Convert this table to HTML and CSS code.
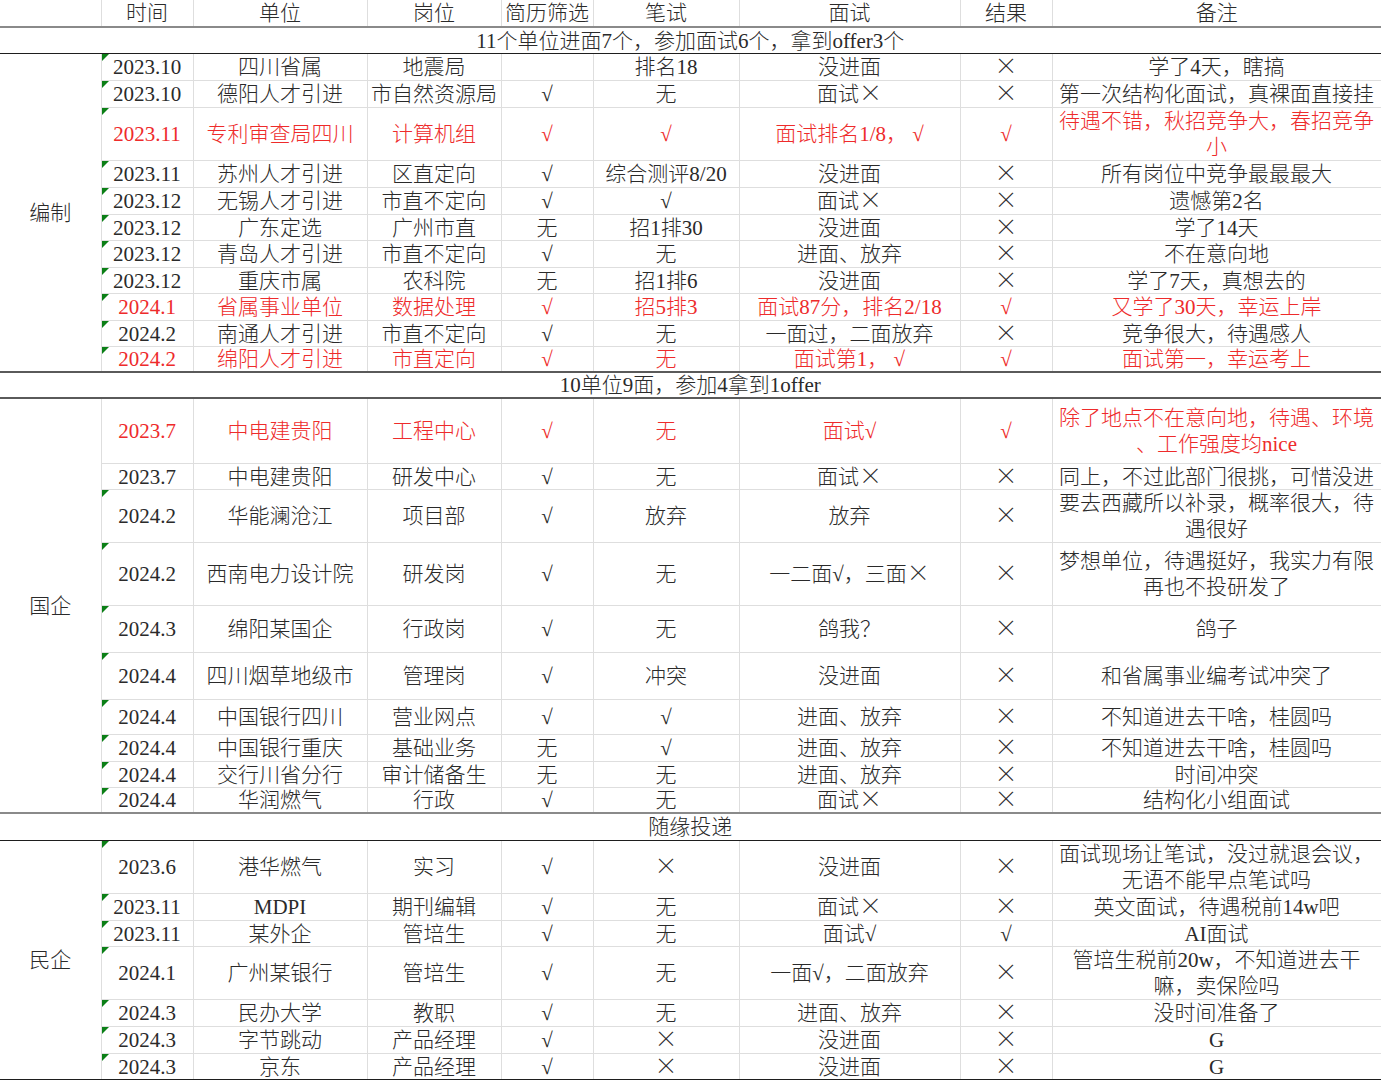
FILE: index.html
```html
<!DOCTYPE html>
<html lang="zh">
<head>
<meta charset="utf-8">
<title>求职记录</title>
<link rel="stylesheet" href="styles.css">
</head>
<body>
<table class="sheet">
  <colgroup>
    <col class="c-cat"><col class="c-time"><col class="c-org"><col class="c-pos"><col class="c-cv"><col class="c-exam"><col class="c-iv"><col class="c-res"><col class="c-note">
  </colgroup>
  <thead>
    <tr class="head r27">
      <th></th><th>时间</th><th>单位</th><th>岗位</th><th>简历筛选</th><th>笔试</th><th>面试</th><th>结果</th><th>备注</th>
    </tr>
  </thead>
  <tbody>
    <tr class="sum sum-a r26"><td colspan="9">11个单位进面7个，参加面试6个，拿到offer3个</td></tr>

    <tr class="r27"><td class="cat" rowspan="11">编制</td><td class="t mk">2023.10</td><td>四川省属</td><td>地震局</td><td></td><td>排名18</td><td>没进面</td><td><span class="x">×</span></td><td class="note">学了4天，瞎搞</td></tr>
    <tr class="r27"><td class="t mk">2023.10</td><td>德阳人才引进</td><td>市自然资源局</td><td>√</td><td>无</td><td>面试<span class="x">×</span></td><td><span class="x">×</span></td><td class="note">第一次结构化面试，真裸面直接挂</td></tr>
    <tr class="r53 red"><td class="t mk">2023.11</td><td>专利审查局四川</td><td>计算机组</td><td>√</td><td>√</td><td>面试排名1/8， √</td><td>√</td><td class="note two">待遇不错，秋招竞争大，春招竞争<br>小</td></tr>
    <tr class="r27"><td class="t mk">2023.11</td><td>苏州人才引进</td><td>区直定向</td><td>√</td><td>综合测评8/20</td><td>没进面</td><td><span class="x">×</span></td><td class="note">所有岗位中竞争最最最大</td></tr>
    <tr class="r27"><td class="t mk">2023.12</td><td>无锡人才引进</td><td>市直不定向</td><td>√</td><td>√</td><td>面试<span class="x">×</span></td><td><span class="x">×</span></td><td class="note">遗憾第2名</td></tr>
    <tr class="r26"><td class="t mk">2023.12</td><td>广东定选</td><td>广州市直</td><td>无</td><td>招1排30</td><td>没进面</td><td><span class="x">×</span></td><td class="note">学了14天</td></tr>
    <tr class="r27"><td class="t mk">2023.12</td><td>青岛人才引进</td><td>市直不定向</td><td>√</td><td>无</td><td>进面、放弃</td><td><span class="x">×</span></td><td class="note">不在意向地</td></tr>
    <tr class="r26"><td class="t mk">2023.12</td><td>重庆市属</td><td>农科院</td><td>无</td><td>招1排6</td><td>没进面</td><td><span class="x">×</span></td><td class="note">学了7天，真想去的</td></tr>
    <tr class="r27 red"><td class="t mk">2024.1</td><td>省属事业单位</td><td>数据处理</td><td>√</td><td>招5排3</td><td>面试87分，排名2/18</td><td>√</td><td class="note">又学了30天，幸运上岸</td></tr>
    <tr class="r26"><td class="t mk">2024.2</td><td>南通人才引进</td><td>市直不定向</td><td>√</td><td>无</td><td>一面过，二面放弃</td><td><span class="x">×</span></td><td class="note">竞争很大，待遇感人</td></tr>
    <tr class="r26 red"><td class="t mk">2024.2</td><td>绵阳人才引进</td><td>市直定向</td><td>√</td><td>无</td><td>面试第1， √</td><td>√</td><td class="note">面试第一，幸运考上</td></tr>

    <tr class="sum sum-b r26"><td colspan="9">10单位9面，参加4拿到1offer</td></tr>

    <tr class="r65 red"><td class="cat" rowspan="10">国企</td><td class="t">2023.7</td><td>中电建贵阳</td><td>工程中心</td><td>√</td><td>无</td><td>面试√</td><td>√</td><td class="note two">除了地点不在意向地，待遇、环境<br>、工作强度均nice</td></tr>
    <tr class="r26"><td class="t">2023.7</td><td>中电建贵阳</td><td>研发中心</td><td>√</td><td>无</td><td>面试<span class="x">×</span></td><td><span class="x">×</span></td><td class="note">同上，不过此部门很挑，可惜没进</td></tr>
    <tr class="r53"><td class="t mk">2024.2</td><td>华能澜沧江</td><td>项目部</td><td>√</td><td>放弃</td><td>放弃</td><td><span class="x">×</span></td><td class="note two">要去西藏所以补录，概率很大，待<br>遇很好</td></tr>
    <tr class="r63"><td class="t mk">2024.2</td><td>西南电力设计院</td><td>研发岗</td><td>√</td><td>无</td><td>一二面√，三面<span class="x">×</span></td><td><span class="x">×</span></td><td class="note two">梦想单位，待遇挺好，我实力有限<br>再也不投研发了</td></tr>
    <tr class="r47"><td class="t mk">2024.3</td><td>绵阳某国企</td><td>行政岗</td><td>√</td><td>无</td><td>鸽我？</td><td><span class="x">×</span></td><td class="note">鸽子</td></tr>
    <tr class="r47"><td class="t mk">2024.4</td><td>四川烟草地级市</td><td>管理岗</td><td>√</td><td>冲突</td><td>没进面</td><td><span class="x">×</span></td><td class="note">和省属事业编考试冲突了</td></tr>
    <tr class="r35"><td class="t mk">2024.4</td><td>中国银行四川</td><td>营业网点</td><td>√</td><td>√</td><td>进面、放弃</td><td><span class="x">×</span></td><td class="note">不知道进去干啥，桂圆吗</td></tr>
    <tr class="r27"><td class="t mk">2024.4</td><td>中国银行重庆</td><td>基础业务</td><td>无</td><td>√</td><td>进面、放弃</td><td><span class="x">×</span></td><td class="note">不知道进去干啥，桂圆吗</td></tr>
    <tr class="r26"><td class="t mk">2024.4</td><td>交行川省分行</td><td>审计储备生</td><td>无</td><td>无</td><td>进面、放弃</td><td><span class="x">×</span></td><td class="note">时间冲突</td></tr>
    <tr class="r26"><td class="t mk">2024.4</td><td>华润燃气</td><td>行政</td><td>√</td><td>无</td><td>面试<span class="x">×</span></td><td><span class="x">×</span></td><td class="note">结构化小组面试</td></tr>

    <tr class="sum sum-c r27"><td colspan="9">随缘投递</td></tr>

    <tr class="r53"><td class="cat last" rowspan="7">民企</td><td class="t mk">2023.6</td><td>港华燃气</td><td>实习</td><td>√</td><td><span class="x">×</span></td><td>没进面</td><td><span class="x">×</span></td><td class="note two">面试现场让笔试，没过就退会议，<br>无语不能早点笔试吗</td></tr>
    <tr class="r27"><td class="t mk">2023.11</td><td>MDPI</td><td>期刊编辑</td><td>√</td><td>无</td><td>面试<span class="x">×</span></td><td><span class="x">×</span></td><td class="note">英文面试，待遇税前14w吧</td></tr>
    <tr class="r26"><td class="t mk">2023.11</td><td>某外企</td><td>管培生</td><td>√</td><td>无</td><td>面试√</td><td>√</td><td class="note">AI面试</td></tr>
    <tr class="r53"><td class="t mk">2024.1</td><td>广州某银行</td><td>管培生</td><td>√</td><td>无</td><td>一面√，二面放弃</td><td><span class="x">×</span></td><td class="note two">管培生税前20w，不知道进去干<br>嘛，卖保险吗</td></tr>
    <tr class="r27"><td class="t mk">2024.3</td><td>民办大学</td><td>教职</td><td>√</td><td>无</td><td>进面、放弃</td><td><span class="x">×</span></td><td class="note">没时间准备了</td></tr>
    <tr class="r27"><td class="t mk">2024.3</td><td>字节跳动</td><td>产品经理</td><td>√</td><td><span class="x">×</span></td><td>没进面</td><td><span class="x">×</span></td><td class="note">G</td></tr>
    <tr class="r26 lastrow"><td class="t mk">2024.3</td><td>京东</td><td>产品经理</td><td>√</td><td><span class="x">×</span></td><td>没进面</td><td><span class="x">×</span></td><td class="note">G</td></tr>
  </tbody>
</table>
</body>
</html>
```

FILE: styles.css
```css
html, body {
  margin: 0;
  padding: 0;
  background: #ffffff;
}

.sheet {
  border-collapse: collapse;
  table-layout: fixed;
  width: 1381px;
  font-family: "Liberation Serif", "Noto Sans CJK SC", serif;
  font-size: 21px;
  font-weight: 300;
  color: #2a2a2a;
}

.c-cat { width: 101px; }
.c-time { width: 92px; }
.c-org { width: 174px; }
.c-pos { width: 134px; }
.c-cv { width: 92px; }
.c-exam { width: 146px; }
.c-iv { width: 221px; }
.c-res { width: 92px; }
.c-note { width: 329px; }

.sheet th,
.sheet td {
  border: 1px solid #dedede;
  padding: 1px 3px 0;
  text-align: center;
  vertical-align: middle;
  font-weight: 300;
  line-height: 22px;
  white-space: nowrap;
}

.sheet td.note.two {
  line-height: 26px;
  padding-top: 0;
}

.x {
  line-height: 0;
  font-family: "Noto Sans CJK JP", "Noto Sans CJK SC", sans-serif;
  font-size: 23px;
  font-weight: 300;
}

.head th {
  border-top: none;
  border-bottom: 2px solid #8a8a8a;
  padding-top: 1px;
  vertical-align: top;
  line-height: 24px;
}
.head th:first-child { border-left: none; }
.head th:last-child { border-right: none; }

.sheet tbody td:last-child { border-right: 1px solid #1e1e1e; }
.sheet tbody td.cat { border-left: none; }
.sum td { border-left: none; }

.sum-a td { border-bottom: 1px solid #1e1e1e; }
.sum-b td { border-top: 2px solid #5a5a5a; border-bottom: 2px solid #5a5a5a; padding-top: 0; }
.sum-c td { border-top: 2px solid #8a8a8a; border-bottom: 1px solid #1e1e1e; }
.lastrow td, .cat.last { border-bottom: 1px solid #1e1e1e; }

.r26 { height: 26px; }
.r27 { height: 27px; }
.r35 { height: 35px; }
.r47 { height: 47px; }
.r53 { height: 53px; }
.r63 { height: 63px; }
.r65 { height: 65px; }

.red td:not(.cat) { color: #ee2b2b; }

.t { position: relative; }
.t.mk::before {
  content: "";
  position: absolute;
  left: 0;
  top: 0;
  width: 0;
  height: 0;
  border-top: 7px solid #0b7f16;
  border-right: 7px solid transparent;
}
```
